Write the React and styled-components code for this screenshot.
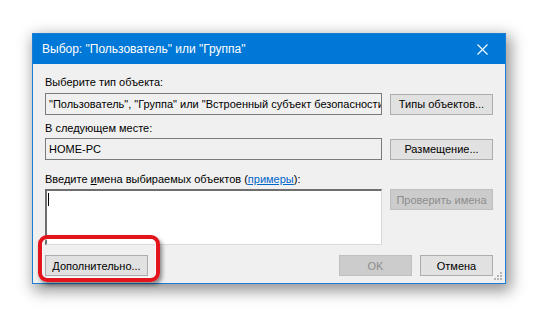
import React from "react";
import styled, { createGlobalStyle } from "styled-components";

const GlobalStyle = createGlobalStyle`
  html, body {
    margin: 0;
    padding: 0;
    background: #ffffff;
  }
  body {
    font-family: "Liberation Sans", Arial, sans-serif;
    font-size: 12px;
    color: #000;
  }
`;

const Page = styled.div`
  width: 539px;
  height: 317px;
  padding: 33px 0 0 32px;
  box-sizing: border-box;
  overflow: hidden;
`;

const Dialog = styled.div`
  position: relative;
  width: 474px;
  height: 251px;
  box-sizing: border-box;
  border: 1px solid #1a7fd4;
  background: #f0f0f0;
  box-shadow: 3px 5px 14px 2px rgba(0, 0, 0, 0.42);
  display: flex;
  flex-direction: column;
`;

const TitleBar = styled.div`
  height: 30px;
  flex: none;
  background: #0078d7;
  color: #fff;
  display: flex;
  align-items: center;
  justify-content: space-between;
  padding-left: 9px;
`;

const Title = styled.span`
  font-size: 12px;
`;

const CloseBtn = styled.div`
  width: 46px;
  height: 30px;
  display: flex;
  align-items: center;
  justify-content: center;
`;

const Body = styled.div`
  flex: 1;
  padding: 11px 12px 0 12px;
  display: flex;
  flex-direction: column;
  font-size: 11px;
`;

const Label = styled.div`
  height: 15px;
  line-height: 15px;
  margin-top: ${(p) => p.$top || 0}px;
  white-space: nowrap;
`;

const Row = styled.div`
  display: flex;
  align-items: ${(p) => p.$align || "center"};
  gap: 8px;
  margin-top: ${(p) => p.$top || 0}px;
`;

const Field = styled.div`
  width: 337px;
  height: 22px;
  box-sizing: border-box;
  border: 1px solid #7a7a7a;
  background: #f0f0f0;
  padding: 0 3px;
  line-height: 20px;
  white-space: nowrap;
  overflow: hidden;
  flex: none;
`;

const TextArea = styled.div`
  width: 337px;
  height: 56px;
  box-sizing: border-box;
  background: #fff;
  border-top: 2px solid #6e6e6e;
  border-left: 2px solid #6e6e6e;
  border-right: 1px solid #d8d8d8;
  border-bottom: 1px solid #d8d8d8;
  padding: 2px 1px;
  flex: none;
`;

const Caret = styled.span`
  display: block;
  width: 1px;
  height: 13px;
  background: #000;
`;

const Button = styled.div`
  width: ${(p) => p.$w || 103}px;
  height: 21px;
  box-sizing: border-box;
  border: 1px solid ${(p) => (p.$disabled ? "#bfbfbf" : "#adadad")};
  background: ${(p) => (p.$disabled ? "#cccccc" : "#e1e1e1")};
  color: ${(p) => (p.$disabled ? "#8d8d8d" : "#000")};
  display: flex;
  align-items: center;
  justify-content: center;
  white-space: nowrap;
  flex: none;
`;

const Spacer = styled.div`
  flex: 1;
`;

const Link = styled.span`
  color: #0066cc;
  text-decoration: underline;
`;

const Key = styled.span`
  text-decoration: underline;
`;

const Grip = styled.svg`
  position: absolute;
  right: 2px;
  bottom: 2px;
`;

const Highlight = styled.div`
  position: absolute;
  left: 5px;
  top: 201px;
  width: 122px;
  height: 47px;
  box-sizing: border-box;
  border: 4px solid #e3141b;
  border-radius: 9px;
  box-shadow: 2px 3px 4px rgba(0, 0, 0, 0.45),
    inset 0 0 0 1px rgba(255, 255, 255, 0.7);
`;

export default function App() {
  return (
    <>
      <GlobalStyle />
      <Page>
        <Dialog>
          <TitleBar>
            <Title>Выбор: "Пользователь" или "Группа"</Title>
            <CloseBtn>
              <svg width="11" height="11" viewBox="0 0 11 11">
                <path d="M0.5 0.5 L10.5 10.5 M10.5 0.5 L0.5 10.5" stroke="#fff" strokeWidth="1.1" />
              </svg>
            </CloseBtn>
          </TitleBar>
          <Body>
            <Label>Выберите тип объекта:</Label>
            <Row $top={3}>
              <Field>"Пользователь", "Группа" или "Встроенный субъект безопасности"</Field>
              <Button>Типы объектов...</Button>
            </Row>
            <Label $top={6}>В следующем месте:</Label>
            <Row $top={2}>
              <Field>HOME-PC</Field>
              <Button>Размещение...</Button>
            </Row>
            <Label $top={12}>
              Введите <Key>и</Key>мена выбираемых объектов (<Link>примеры</Link>):
            </Label>
            <Row $top={2} $align="flex-start">
              <TextArea>
                <Caret />
              </TextArea>
              <Button $disabled>Проверить имена</Button>
            </Row>
            <Row $top={10}>
              <Button>Дополнительно...</Button>
              <Spacer />
              <Button $w={73} $disabled>OK</Button>
              <Button $w={73}>Отмена</Button>
            </Row>
          </Body>
          <Grip width="9" height="9" viewBox="0 0 9 9">
            {[
              [6, 0],
              [3, 3],
              [6, 3],
              [0, 6],
              [3, 6],
              [6, 6],
            ].map(([x, y]) => (
              <rect key={`${x}-${y}`} x={x} y={y} width="2" height="2" fill="#b5b5b5" />
            ))}
          </Grip>
          <Highlight />
        </Dialog>
      </Page>
    </>
  );
}
